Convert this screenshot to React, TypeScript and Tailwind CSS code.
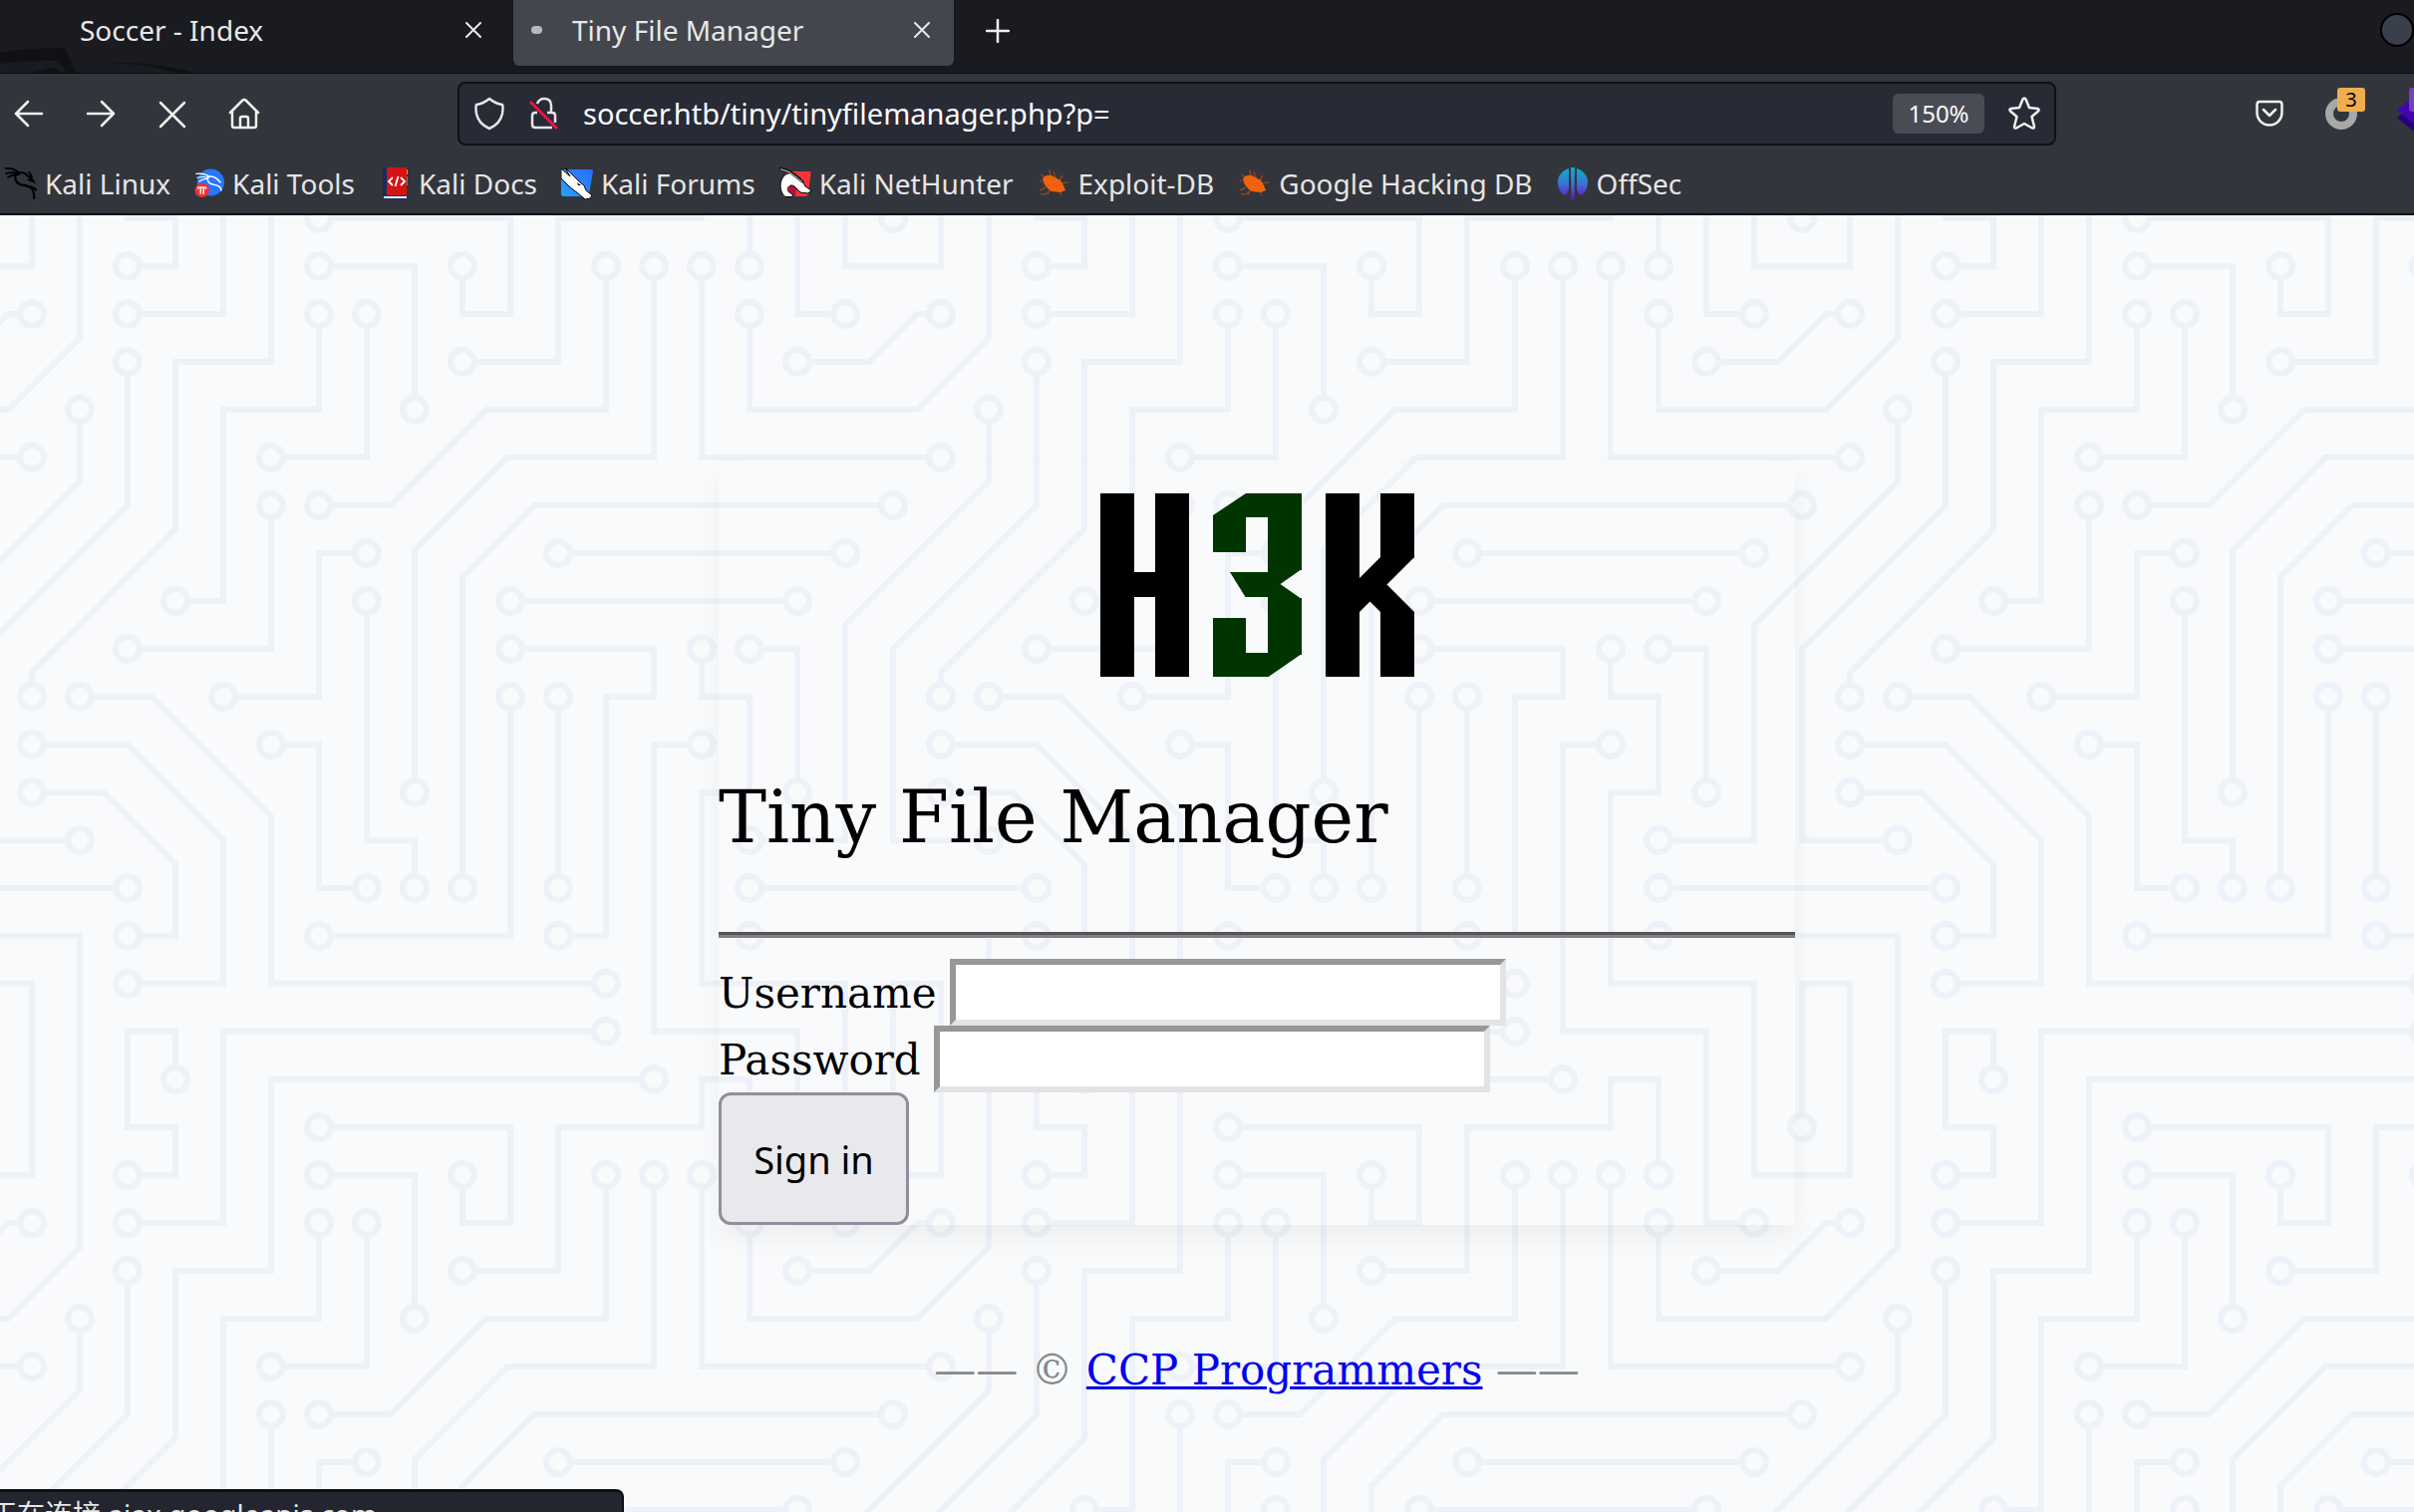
import type { ReactNode } from 'react'

const BOOKMARKS: { label: string; icon: ReactNode }[] = [
  { label: 'Kali Linux', icon: <KaliIcon /> },
  { label: 'Kali Tools', icon: <KaliToolsIcon /> },
  { label: 'Kali Docs', icon: <KaliDocsIcon /> },
  { label: 'Kali Forums', icon: <KaliForumsIcon /> },
  { label: 'Kali NetHunter', icon: <NetHunterIcon /> },
  { label: 'Exploit-DB', icon: <BugIcon /> },
  { label: 'Google Hacking DB', icon: <BugIcon /> },
  { label: 'OffSec', icon: <OffSecIcon /> },
]

// circuit board tile, 304 x 304 units
const TRACES = [
  'M0 225H49', 'M209 273H81V304', 'M257 225H304', 'M257 241H304', 'M273 129H177', 'M0 81H17',
  'M193 113H289', 'M257 0V17', 'M193 161V225', 'M241 17V81H304', 'M257 33V65H304',
  'M129 129V209H145V225', 'M129 113H113V161H81', 'M113 241H177V161', 'M97 177H113V225H129',
  'M65 289V273H49V304', 'M241 177H225V273H273V304', 'M257 145H273V193', 'M193 241H209V161H225V145H177',
  'M289 33H273V0', 'M97 97V145H49', 'M49 33H81V0', 'M113 33V65H81V129H65', 'M97 81H129V33',
  'M113 17H145V65', 'M225 289H97V304', 'M241 145V161H257V193H241V257H289V304', 'M49 17H65V1H48',
  'M161 49H193V1H242', 'M113 1H177V33H161V17', 'M113 97H137L169 65H209V17', 'M145 193V112L176 81H225V17',
  'M161 225V121L185 97H305', 'M17 161V153L65 105V49H97V0', 'M49 49V97L1 145V209H33', 'M33 65V89L-1 123',
  'M17 33H9L-2 44', 'M273 49H297L306 40', 'M257 209H289V137L306 120', 'M49 241H65V217L41 193H17',
  'M209 257H97V201L57 161H33', 'M49 257H81V209L49 177H17', 'M33 0V41L9 65H0', 'M1 305V257H17V304',
  'M33 304V241H0', 'M17 0V17H0', 'M289 0V17H304', 'M257 304V289H241V304',
].join('')

const NODES = [
  [49, 225], [209, 273], [257, 225], [257, 241], [273, 129], [177, 129], [17, 81], [193, 113], [289, 113],
  [257, 17], [193, 225], [193, 161], [241, 17], [257, 33], [129, 129], [145, 225], [129, 113], [81, 161],
  [113, 241], [177, 161], [97, 177], [129, 225], [65, 289], [241, 177], [257, 145], [273, 193], [193, 241],
  [177, 145], [289, 33], [97, 97], [49, 145], [49, 33], [113, 33], [65, 129], [97, 81], [129, 33],
  [113, 17], [145, 65], [225, 289], [241, 145], [49, 17], [161, 49], [113, 1], [113, 305], [161, 17],
  [113, 97], [209, 17], [145, 193], [225, 17], [161, 225], [305, 97], [1, 97], [17, 161], [49, 49],
  [33, 209], [33, 65], [17, 33], [273, 49], [257, 209], [49, 241], [17, 193], [209, 257], [33, 161],
  [49, 257], [17, 177], [1, 1], [305, 1], [1, 305], [305, 305],
]

function CircuitBackground() {
  return (
    <svg className="absolute inset-0 h-full w-full" aria-hidden="true">
      <defs>
        <pattern
          id="circuit"
          width="304"
          height="304"
          patternUnits="userSpaceOnUse"
          patternTransform="translate(-19 0) scale(3)"
        >
          <path d={TRACES} fill="none" stroke="#eef1f7" strokeWidth="2" />
          {NODES.map(([x, y]) => (
            <circle key={`${x}-${y}`} cx={x} cy={y} r="4" fill="#f8fafc" stroke="#eef1f7" strokeWidth="2" />
          ))}
        </pattern>
      </defs>
      <rect width="100%" height="100%" fill="url(#circuit)" />
    </svg>
  )
}

function Logo() {
  return (
    <svg width="315" height="184" viewBox="0 0 315 184" role="img" aria-label="H3K">
      <g fill="#000">
        <rect width="34" height="184" />
        <rect x="55" width="34" height="184" />
        <rect x="30" y="79" width="30" height="25" />
      </g>
      <g fill="#003500">
        <rect width="33" height="22" transform="matrix(1 0 -1.5 1 146 0)" />
        <rect x="146" width="56" height="24" />
        <rect x="113" y="22" width="33" height="37" />
        <rect x="168" y="20" width="34" height="57" />
        <rect width="24" height="25" transform="matrix(1 0 .62 1 130 79)" />
        <rect x="148" y="79" width="28" height="25" />
        <rect x="168" y="76" width="12" height="30" />
        <rect width="20" height="15" transform="matrix(1 0 -1.43 1 182 76)" />
        <rect width="20" height="15" transform="matrix(1 0 1.43 1 160.5 91)" />
        <rect x="168" y="105" width="34" height="57" />
        <rect x="113" y="125" width="33" height="40" />
        <rect x="113" y="160" width="56" height="24" />
        <rect width="34" height="23" transform="matrix(1 0 -1.45 1 168 161)" />
      </g>
      <g fill="#000">
        <rect x="226" width="34" height="184" />
        <rect x="281" width="34" height="65" />
        <rect x="281" y="119" width="34" height="65" />
        <rect width="34" height="55" transform="matrix(1 0 -1 1 281 64)" />
        <rect width="34" height="28" transform="matrix(1 0 1 1 253.5 91.5)" />
      </g>
    </svg>
  )
}

function KaliIcon() {
  return (
    <svg width="32" height="32" viewBox="0 0 32 32" fill="none" stroke="#000" strokeLinecap="round">
      <path d="M0 1c5-.3 10 .8 14 4M1 6c4-1 8-1.500 13 0M3 10c3-2 7-3 11-3" strokeWidth="1.800" />
      <path d="M12 5c-3 4-2 10 3 12 5 1.500 10 1 12.500 5 1.500 3 2 6 1.500 9" strokeWidth="2.200" />
      <path d="M13 6c4-2 8 0 9.500 2.500 3 .8 5 3 6.500 6l-5.500-2.500M24 5l3 4M22 19c4 0 7 .5 9.500 4" strokeWidth="2" />
    </svg>
  )
}

function KaliToolsIcon() {
  return (
    <svg width="30" height="32" viewBox="0 0 31 32">
      <circle cx="17" cy="15" r="14" fill="#2777ff" />
      <g fill="none" stroke="#fff" strokeLinecap="round">
        <path d="M2 6c5-.5 10 .5 14 3M3 10c4-1 8-1 12 0M5 14c3-2 6-3 9-3" strokeWidth="1.200" />
        <path d="M14 9c-1 4 1 7 5 8s8 1 9 6M15 9c4-1 8 1 12 6" strokeWidth="1.500" />
      </g>
      <circle cx="8" cy="23" r="7.500" fill="#f22f35" />
      <path d="M4 20h8M6.500 20v7M9.500 20v7M4 20v2M12 20v2" stroke="#fff" strokeWidth="1.500" />
    </svg>
  )
}

function KaliDocsIcon() {
  return (
    <svg width="32" height="32" viewBox="0 0 32 32">
      <rect x="4" width="24" height="32" fill="#122d5e" />
      <path d="M28 2h1v5h-1z" fill="#f90" />
      <path d="M28 9h1v9h-1z" fill="#1aa36f" />
      <rect x="8" width="20" height="28" fill="#d41317" />
      <rect x="5" y="29" width="23" height="2" fill="#fff" />
      <path d="M14 10l-4 4 4 4M22 10l4 4-4 4M19.500 9l-3 10" fill="none" stroke="#fff" strokeWidth="1.800" />
    </svg>
  )
}

function KaliForumsIcon() {
  return (
    <svg width="32" height="32" viewBox="0 0 32 32">
      <defs>
        <linearGradient id="forums" x1="0" y1="1" x2="1" y2="0">
          <stop offset="0" stopColor="#22a2ff" />
          <stop offset="1" stopColor="#2a6cff" />
        </linearGradient>
      </defs>
      <path d="M3 2h27q2 0 2 2l-4 22q-.5 3-3 3H2q-2 0-2-2V5z" fill="url(#forums)" />
      <path
        d="M0 1l9 8-5-9 15 15 4 3 2 5 6 5-2 3-5 1-7-6-8-6-9-9z"
        fill="#fff"
        stroke="#000"
        strokeWidth="1"
      />
      <path d="M16 15l4 3h-3z" fill="#000" />
    </svg>
  )
}

function NetHunterIcon() {
  return (
    <svg width="32" height="32" viewBox="0 0 32 32">
      <path d="M8 4h22q2 0 1.500 2L29 26q-.5 3-3 3H6q-4 0-3-4z" fill="#f8333a" />
      <path d="M10 18c4-2 8 1 7 5l-1 6h-6z" fill="#b5123f" />
      <path
        d="M5 8c5-4 12-3 16 3l3 4 2 4 6 4-3 3-8-1-6-6c-4-3-8 1-6 5l5 4-2 1.500H6C-1 24 0 13 5 8z"
        fill="#fff"
        stroke="#000"
        strokeWidth="1"
      />
      <path d="M0 1l10 3 14 11" fill="none" stroke="#000" strokeWidth="2.500" />
      <path d="M1 1.500l9 3 13 10" fill="none" stroke="#ddd" strokeWidth="1" />
    </svg>
  )
}

function BugIcon() {
  return (
    <svg width="33" height="32" viewBox="0 0 33 32">
      <path
        d="M8 12L4 7M13 9l-1-7M18 10l-2-6M24 16l7-1M22 13l3-5M8 20l-6 3M14 22l-6 5M22 24l2 4M4 14l-2-1M3 27l9-1"
        stroke="#8f431f"
        strokeWidth="1.500"
      />
      <path d="M5 12q2-5 9-4l9 5 3 5 2 5-5 2-9-1q-7-4-9-12z" fill="#f0620f" />
    </svg>
  )
}

function OffSecIcon() {
  return (
    <svg width="32" height="32" viewBox="0 0 32 32">
      <defs>
        <linearGradient id="offsec" x1="0" y1="0" x2="0" y2="32" gradientUnits="userSpaceOnUse">
          <stop offset="0" stopColor="#06b4c9" />
          <stop offset=".5" stopColor="#3a74d4" />
          <stop offset="1" stopColor="#6a12c4" />
        </linearGradient>
      </defs>
      <path
        d="M12 1v21q-1 4-4 6C3 25 1 20 1 14.500S5 3 12 1zM20 1v21q1 4 4 6c5-3 7-8 7-13.500S27 3 20 1zM14 0h4l-.5 32h-3z"
        fill="url(#offsec)"
      />
    </svg>
  )
}

function CloseIcon() {
  return (
    <svg width="16" height="16" viewBox="0 0 16 16" stroke="#e8e8e8" strokeWidth="2" strokeLinecap="round">
      <path d="M1 1l14 14M15 1L1 15" />
    </svg>
  )
}

function TabBar() {
  return (
    <div className="relative flex h-[74px] items-start border-b border-[#0c0c12] bg-[#1a1b20] text-[28px] leading-[60px] text-[#e8e8e6]">
      <svg className="absolute bottom-0 left-0" width="200" height="26" viewBox="0 0 200 26" aria-hidden="true">
        <path d="M0 6Q30 1 65 1L77 26H67L58 14Q30 13 0 17z" fill="#101115" />
        <path d="M30 26L56 20l6 6z" fill="#101115" />
        <path d="M105 16q50-2 90 10h-20q-30-10-70-10z" fill="#101115" />
      </svg>
      <div className="relative flex h-[66px] w-[515px] items-start pr-8 pl-20">
        <span className="flex-1">Soccer - Index</span>
        <button aria-label="Close tab" className="flex h-[60px] items-center">
          <CloseIcon />
        </button>
      </div>
      <div className="flex h-[66px] w-[442px] items-start rounded-b-md bg-[#44464e] pr-6 pl-[18px] shadow-md">
        <span className="mt-[26px] mr-[30px] h-2 w-[11px] rounded-full bg-[#b8b8ba]" />
        <span className="flex-1">Tiny File Manager</span>
        <button aria-label="Close tab" className="flex h-[60px] items-center">
          <CloseIcon />
        </button>
      </div>
      <button aria-label="New tab" className="ml-8 flex h-[62px] items-center">
        <svg width="24" height="24" viewBox="0 0 24 24" stroke="#f0f0ee" strokeWidth="2.500" strokeLinecap="round">
          <path d="M12 1v22M1 12h22" />
        </svg>
      </button>
      <span className="mt-[13px] ml-auto h-[34px] w-[34px] rounded-full border-2 border-black bg-[#3a3f4c]" />
    </div>
  )
}

const NAV_ICONS = [
  { label: 'Back', d: 'M29 16H3M15 4L3 16l12 12' },
  { label: 'Forward', d: 'M3 16h26M17 4l12 12-12 12' },
  { label: 'Stop', d: 'M4 5l24 24M28 5L4 29' },
  { label: 'Home', d: 'M2 15L14 3q2-2 4 0l12 12M4 14v14q0 2 2 2h20q2 0 2-2V14M12 30V21q0-2 2-2h4q2 0 2 2v9' },
]

function Toolbar() {
  return (
    <div className="flex h-20 items-center">
      <div className="-ml-[7px] flex">
        {NAV_ICONS.map((icon) => (
          <button key={icon.label} aria-label={icon.label} className="flex w-[72px] justify-center">
            <svg
              width="32"
              height="32"
              viewBox="0 0 32 32"
              fill="none"
              stroke="#f0f0ec"
              strokeWidth="2.500"
              strokeLinecap="round"
              strokeLinejoin="round"
            >
              <path d={icon.d} />
            </svg>
          </button>
        ))}
      </div>

      <div className="ml-[178px] flex h-16 flex-1 items-center rounded-lg border-2 border-[#0f1014] bg-[#282a35] pr-3.5 pl-3.5">
        <svg width="32" height="34" viewBox="0 0 32 34" fill="none" stroke="#e6e6e8" strokeWidth="2.500" strokeLinejoin="round">
          <path d="M16 2q6 5 13 6 1 2 0 9-2 10-13 15Q5 27 3 17 2 10 3 8q7-1 13-6z" />
        </svg>
        <svg className="ml-6" width="30" height="34" viewBox="0 0 30 34" fill="none" stroke="#e6e6e8" strokeWidth="2.500">
          <path d="M8 7q2-5 7-5 7 0 7 7v7M18 16h5q3 0 3 3v7M8 16H6q-3 0-3 3v9q0 3 3 3h17" />
          <path d="M1 5l27 27" stroke="#f01246" strokeWidth="3" />
        </svg>
        <input
          aria-label="Address"
          className="ml-6 min-w-0 flex-1 bg-transparent text-[29px] text-[#fbfbfe] outline-none"
          defaultValue="soccer.htb/tiny/tinyfilemanager.php?p="
        />
        <button className="h-10 w-[92px] rounded-md bg-[#4a4c55] text-2xl text-[#fbfbfe]">150%</button>
        <button aria-label="Bookmark this page" className="ml-6">
          <svg width="32" height="34" viewBox="0 0 32 34" fill="none" stroke="#f0f0ee" strokeWidth="2.500" strokeLinejoin="round">
            <path d="M14.500 2.500q1.500-2 3 0L21 11l8.500 1q2 .5.5 2.500L23.500 20l2.500 10q0 2-2 1.500L16 27l-8 4.500q-2 .5-2-1.500l2.500-10L2 14.500q-1.500-2 .5-2.500L11 11z" />
          </svg>
        </button>
      </div>

      <div className="flex w-[359px] overflow-hidden pl-[178px]">
        <button aria-label="Save to Pocket" className="flex h-16 w-[72px] shrink-0 items-center justify-center">
          <svg width="28" height="28" viewBox="0 0 28 28" fill="none" stroke="#f0f0ee" strokeWidth="2.500" strokeLinecap="round" strokeLinejoin="round">
            <path d="M4 2h20q2.500 0 2.500 3v8a12.500 12.500 0 0 1-25 0V5q0-3 2.500-3zM8 10l6 6 6-6" />
          </svg>
        </button>
        <button aria-label="Extension" className="relative flex h-16 w-[72px] shrink-0 items-center justify-center">
          <svg width="32" height="34" viewBox="0 0 32 34" fill="none" stroke="#a8a8a8" strokeWidth="8">
            <circle cx="16" cy="17" r="12" />
          </svg>
          <span className="absolute top-1.5 left-8 h-6 w-7 rounded-[3px] bg-[#f0ad4e] text-center text-xl leading-6 text-black">
            3
          </span>
        </button>
        <button aria-label="Extension" className="relative flex h-16 w-[72px] shrink-0 items-center justify-center">
          <svg width="34" height="34" viewBox="0 0 34 34">
            <path d="M1 21l16-12 16 12-16 13z" fill="#22037a" />
            <path d="M1 13L17 1l16 12-16 13z" fill="#4503b0" />
          </svg>
          <span className="absolute top-1.5 left-8 h-6 w-7 rounded-[3px] bg-[#7440c4]" />
        </button>
      </div>
    </div>
  )
}

function BookmarksBar() {
  return (
    <nav className="flex h-[62px] items-center gap-x-6 border-b-2 border-[#0c0c12] pl-[5px] text-[28px] text-[#e6e6e2]">
      {BOOKMARKS.map((b) => (
        <a key={b.label} href="#" className="flex items-center gap-2 whitespace-nowrap">
          {b.icon}
          {b.label}
        </a>
      ))}
    </nav>
  )
}

const FIELD =
  'ml-[13px] h-[67px] w-[558px] border-6 border-t-[#979797] border-r-[#e3e3e3] border-b-[#e3e3e3] border-l-[#979797] bg-white px-2 outline-none'

function LoginPage() {
  return (
    <main className="relative flex-1 bg-[#f8fafc] pl-[100px] font-['DejaVu_Serif',serif] text-[42px] leading-[49px] text-black">
      <CircuitBackground />
      <div className="relative mx-auto w-[1080px] pt-[249px]">
        <form className="shadow-[0_12px_24px_rgba(0,0,0,0.05)]" onSubmit={(e) => e.preventDefault()}>
          <div className="flex justify-center pt-[30px]">
            <Logo />
          </div>
          <h1 className="pt-[99px] text-[72px] leading-[84px]">Tiny File Manager</h1>
          <hr className="mt-[73px] mb-[21px] h-[6px] border-t-3 border-b-3 border-t-[#555] border-b-[#808080]" />
          <div className="flex items-center">
            <label htmlFor="username" className="pt-[2px]">
              Username
            </label>
            <input id="username" type="text" className={FIELD} />
          </div>
          <div className="flex items-center">
            <label htmlFor="password" className="pt-[2px]">
              Password
            </label>
            <input id="password" type="password" className={FIELD} />
          </div>
          <button
            type="submit"
            className="block h-[133px] w-[191px] rounded-xl border-3 border-[#8f8f9d] bg-[#e9e9ed] pt-[2px] font-['Noto_Sans',sans-serif] text-[38px]"
          >
            Sign in
          </button>
        </form>
        <footer className="pt-[121px] text-center text-[#888]">
          —— ©{' '}
          <a href="#" className="text-[#0000ee] underline decoration-3">
            CCP Programmers
          </a>{' '}
          ——
        </footer>
      </div>
    </main>
  )
}

export default function App() {
  return (
    <div className="relative flex h-screen flex-col overflow-hidden font-['Noto_Sans','Noto_Sans_CJK_SC',sans-serif]">
      <header className="bg-[#33353d]">
        <TabBar />
        <Toolbar />
        <BookmarksBar />
      </header>
      <LoginPage />
      <div className="absolute bottom-0 left-[-19px] h-[23px] w-[645px] overflow-hidden rounded-tr-lg border-t-3 border-r-2 border-[#0f1014] bg-[#23252f] pl-2 text-[28px] leading-[44px] whitespace-nowrap text-[#e6e6e2]">
        正在连接 ajax.googleapis.com…
      </div>
    </div>
  )
}
